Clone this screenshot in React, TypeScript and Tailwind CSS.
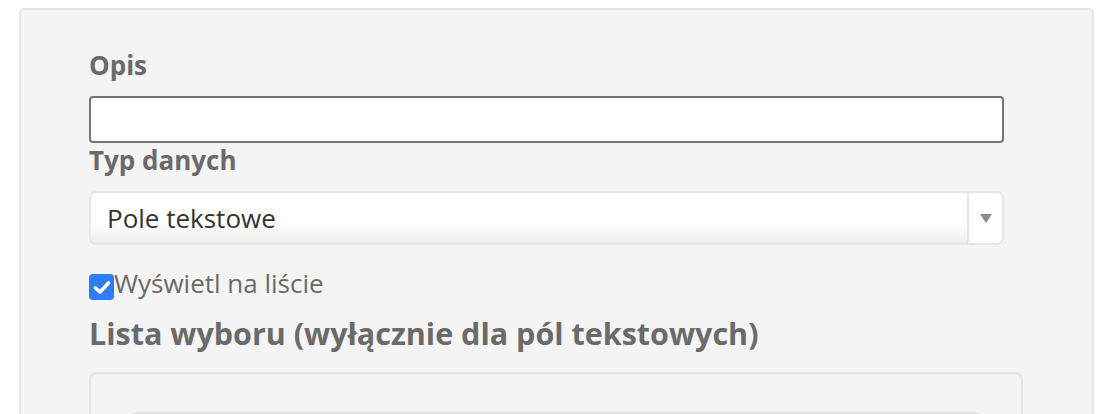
import React from "react";

export default function App() {
  return (
    <div
      className="h-screen bg-white pt-[8px] pl-[19px] overflow-hidden"
      style={{ fontFamily: '"Open Sans", "Liberation Sans", sans-serif' }}
    >
      <div className="w-[1075px] h-[440px] rounded-[5px] border-2 border-[#e6e6e6] bg-[#f4f4f4] pl-[68px] pt-[40px]">
        {/* Opis */}
        <label className="block text-[26px] leading-[31px] font-bold text-[#6a6a6a] mb-[15px]">Opis</label>
        <input
          type="text"
          className="block w-[915px] h-[47px] rounded-[4px] border-2 border-[#737373] bg-white mb-[2px] outline-none"
        />

        {/* Typ danych */}
        <label className="block text-[26px] leading-[31px] font-bold text-[#6a6a6a] mb-[15px]">Typ danych</label>
        <div className="flex w-[915px] h-[54px] rounded-[7px] border-2 border-[#e6e6e6] bg-gradient-to-b from-white from-60% to-[#ededed] overflow-hidden">
          <div className="flex-1 flex items-center pl-[16px] text-[26px] text-[#333333]">Pole tekstowe</div>
          <div className="w-[35px] border-l-2 border-[#e6e6e6] bg-white flex items-center justify-center">
            <svg width="12" height="9" viewBox="0 0 12 9">
              <path d="M0 0 H12 L6 9 Z" fill="#8a8a8a" />
            </svg>
          </div>
        </div>

        {/* Checkbox */}
        <div className="flex items-start mt-[23px]">
          <span className="mt-[6px] w-[25px] h-[26px] rounded-[4px] bg-[#2f7cf6] flex items-center justify-center shrink-0">
            <svg width="18" height="15" viewBox="0 0 18 15">
              <path d="M2.5 8 L7 12 L15.5 3" stroke="white" strokeWidth="3.6" fill="none" strokeLinecap="round" strokeLinejoin="round" />
            </svg>
          </span>
          <span className="text-[26px] leading-[31px] text-[#6a6a6a]">Wyświetl na liście</span>
        </div>

        {/* Heading */}
        <h2 className="mt-[15px] text-[30.5px] leading-[37px] font-bold text-[#6a6a6a]">
          Lista wyboru (wyłącznie dla pól tekstowych)
        </h2>

        {/* Inner box */}
        <div className="mt-[20px] w-[934px] h-[120px] rounded-[7px] border-2 border-[#e3e3e3] bg-[#f4f4f4] shadow-[inset_0_1px_2px_rgba(0,0,0,0.04)] pl-[40px] pt-[38px]">
          <div className="w-[850px] h-[60px] rounded-[6px] border-2 border-[#e0e0e0] bg-[#f4f4f4]" />
        </div>
      </div>
    </div>
  );
}
